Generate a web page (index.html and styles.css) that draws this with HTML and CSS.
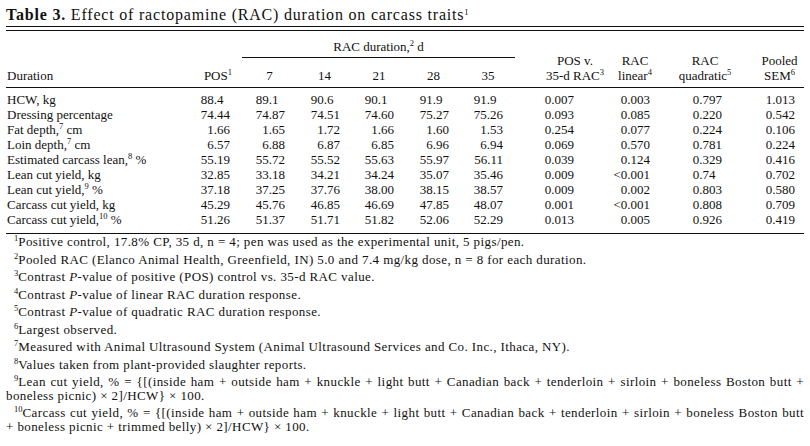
FILE: index.html
```html
<!DOCTYPE html>
<html lang="en">
<head>
<meta charset="utf-8">
<title>Table 3</title>
<link rel="stylesheet" href="styles.css">
</head>
<body>
<div class="title"><b>Table 3.</b> Effect of ractopamine (RAC) duration on carcass traits<span class="sup">1</span></div>
<div class="double"></div>
<table class="tbl">
  <colgroup>
    <col class="c-label"><col class="c-pos"><col class="c-d"><col class="c-d"><col class="c-d2"><col class="c-d"><col class="c-d2"><col class="c-posv"><col class="c-lin"><col class="c-quad"><col class="c-sem">
  </colgroup>
  <thead>
    <tr>
      <th rowspan="2" class="h-label">Duration</th>
      <th rowspan="2" class="h-pos">POS<span class="sup">1</span></th>
      <th colspan="5" class="h-span">RAC duration,<span class="sup">2</span> d</th>
      <th rowspan="2" class="h-posv">POS v.<br>35-d RAC<span class="sup">3</span></th>
      <th rowspan="2" class="h-lin">RAC<br>linear<span class="sup">4</span></th>
      <th rowspan="2" class="h-quad">RAC<br>quadratic<span class="sup">5</span></th>
      <th rowspan="2" class="h-sem">Pooled<br>SEM<span class="sup">6</span></th>
    </tr>
    <tr>
      <th class="h-d">7</th>
      <th class="h-d">14</th>
      <th class="h-d">21</th>
      <th class="h-d">28</th>
      <th class="h-d">35</th>
    </tr>
  </thead>
  <tbody>
    <tr class="first">
      <td>HCW, kg</td><td>88.4<span class="ph">0</span></td><td>89.1<span class="ph">0</span></td><td>90.6<span class="ph">0</span></td><td>90.1<span class="ph">0</span></td><td>91.9<span class="ph">0</span></td><td>91.9<span class="ph">0</span></td><td>0.007</td><td>0.003</td><td>0.797</td><td>1.013</td>
    </tr>
    <tr>
      <td>Dressing percentage</td><td>74.44</td><td>74.87</td><td>74.51</td><td>74.60</td><td>75.27</td><td>75.26</td><td>0.093</td><td>0.085</td><td>0.220</td><td>0.542</td>
    </tr>
    <tr>
      <td>Fat depth,<span class="sup">7</span> cm</td><td>1.66</td><td>1.65</td><td>1.72</td><td>1.66</td><td>1.60</td><td>1.53</td><td>0.254</td><td>0.077</td><td>0.224</td><td>0.106</td>
    </tr>
    <tr>
      <td>Loin depth,<span class="sup">7</span> cm</td><td>6.57</td><td>6.88</td><td>6.87</td><td>6.85</td><td>6.96</td><td>6.94</td><td>0.069</td><td>0.570</td><td>0.781</td><td>0.224</td>
    </tr>
    <tr>
      <td>Estimated carcass lean,<span class="sup">8</span> %</td><td>55.19</td><td>55.72</td><td>55.52</td><td>55.63</td><td>55.97</td><td>56.11</td><td>0.039</td><td>0.124</td><td>0.329</td><td>0.416</td>
    </tr>
    <tr>
      <td>Lean cut yield, kg</td><td>32.85</td><td>33.18</td><td>34.21</td><td>34.24</td><td>35.07</td><td>35.46</td><td>0.009</td><td>&lt;0.001</td><td>0.74<span class="ph">0</span></td><td>0.702</td>
    </tr>
    <tr>
      <td>Lean cut yield,<span class="sup">9</span> %</td><td>37.18</td><td>37.25</td><td>37.76</td><td>38.00</td><td>38.15</td><td>38.57</td><td>0.009</td><td>0.002</td><td>0.803</td><td>0.580</td>
    </tr>
    <tr>
      <td>Carcass cut yield, kg</td><td>45.29</td><td>45.76</td><td>46.85</td><td>46.69</td><td>47.85</td><td>48.07</td><td>0.001</td><td>&lt;0.001</td><td>0.808</td><td>0.709</td>
    </tr>
    <tr class="last">
      <td>Carcass cut yield,<span class="sup">10</span> %</td><td>51.26</td><td>51.37</td><td>51.71</td><td>51.82</td><td>52.06</td><td>52.29</td><td>0.013</td><td>0.005</td><td>0.926</td><td>0.419</td>
    </tr>
  </tbody>
</table>
<div class="notes">
  <p class="fn"><span class="sup">1</span>Positive control, 17.8% CP, 35 d, n = 4; pen was used as the experimental unit, 5 pigs/pen.</p>
  <p class="fn"><span class="sup">2</span>Pooled RAC (Elanco Animal Health, Greenfield, IN) 5.0 and 7.4 mg/kg dose, n = 8 for each duration.</p>
  <p class="fn"><span class="sup">3</span>Contrast <i>P</i>-value of positive (POS) control vs. 35-d RAC value.</p>
  <p class="fn"><span class="sup">4</span>Contrast <i>P</i>-value of linear RAC duration response.</p>
  <p class="fn"><span class="sup">5</span>Contrast <i>P</i>-value of quadratic RAC duration response.</p>
  <p class="fn"><span class="sup">6</span>Largest observed.</p>
  <p class="fn"><span class="sup">7</span>Measured with Animal Ultrasound System (Animal Ultrasound Services and Co. Inc., Ithaca, NY).</p>
  <p class="fn"><span class="sup">8</span>Values taken from plant-provided slaughter reports.</p>
  <p class="fn"><span class="jl"><span class="sup">9</span>Lean cut yield, % = {[(inside ham + outside ham + knuckle + light butt + Canadian back + tenderloin + sirloin + boneless Boston butt +</span>boneless picnic) × 2]/HCW} × 100.</p>
  <p class="fn"><span class="jl"><span class="sup">10</span>Carcass cut yield, % = {[(inside ham + outside ham + knuckle + light butt + Canadian back + tenderloin + sirloin + boneless Boston butt</span>+ boneless picnic + trimmed belly) × 2]/HCW} × 100.</p>
</div>
</body>
</html>
```

FILE: styles.css
```css
* {
  box-sizing: border-box;
}

html, body {
  background: #ffffff;
}

body {
  margin: 0;
  padding: 6px;
  width: 810px;
  font-family: "Liberation Serif", "Times New Roman", serif;
  font-size: 13px;
  color: #111111;
}

.sup {
  font-size: 8.5px;
  vertical-align: 5px;
  line-height: 0;
  letter-spacing: 0;
}

.title {
  font-size: 16px;
  letter-spacing: 0.8px;
  line-height: 17px;
  height: 17px;
  margin-bottom: 3px;
  white-space: nowrap;
}

.title b {
  font-weight: bold;
}

.double {
  width: 798px;
  height: 5px;
  border-top: 1px solid #111;
  border-bottom: 1px solid #111;
}

.tbl {
  width: 798px;
  table-layout: fixed;
  border-collapse: separate;
  border-spacing: 0;
  line-height: 15px;
}

.c-label { width: 174px; }
.c-pos { width: 62px; }
.c-d { width: 55px; }
.c-d2 { width: 54px; }
.c-posv { width: 90px; }
.c-lin { width: 60px; }
.c-quad { width: 80px; }
.c-sem { width: 59px; }

.tbl th {
  font-weight: normal;
  padding: 0;
  white-space: nowrap;
}

.tbl th[rowspan] {
  vertical-align: bottom;
  padding-bottom: 4px;
  border-bottom: 1px solid #111;
  text-align: center;
}

.h-label {
  text-align: left !important;
  padding-left: 1px !important;
}

.h-pos {
  text-align: right !important;
  padding-right: 10px !important;
}

.h-posv {
  padding-left: 30px !important;
}

.h-sem {
  padding-left: 10px !important;
}

.h-span {
  padding: 8px 0 3px !important;
  border-bottom: 1px solid #111;
  text-align: center;
}

.h-d {
  padding: 10px 0 4px !important;
  border-bottom: 1px solid #111;
  text-align: center;
}

.tbl td {
  padding: 0;
  text-align: right;
  white-space: nowrap;
}

.tbl td:nth-child(1) {
  text-align: left;
  padding-left: 1px;
}

.tbl td:nth-child(2),
.tbl td:nth-child(3),
.tbl td:nth-child(4),
.tbl td:nth-child(5),
.tbl td:nth-child(6),
.tbl td:nth-child(7) {
  padding-right: 12px;
}

.tbl td:nth-child(8) { padding-right: 31px; }
.tbl td:nth-child(9) { padding-right: 15px; }
.tbl td:nth-child(10) { padding-right: 23px; }
.tbl td:nth-child(11) { padding-right: 9px; }

.tbl tr.first td {
  padding-top: 4px;
}

.tbl tr.last td {
  padding-bottom: 6px;
  border-bottom: 1px solid #111;
}

.ph {
  visibility: hidden;
}

.notes {
  width: 798px;
  margin-top: 1px;
}

.fn {
  margin: 0 0 4px;
  line-height: 13.5px;
  letter-spacing: 0.4px;
  text-indent: 8px;
  text-align: left;
}

.jl {
  display: block;
  text-align: justify;
  text-align-last: justify;
}
```
